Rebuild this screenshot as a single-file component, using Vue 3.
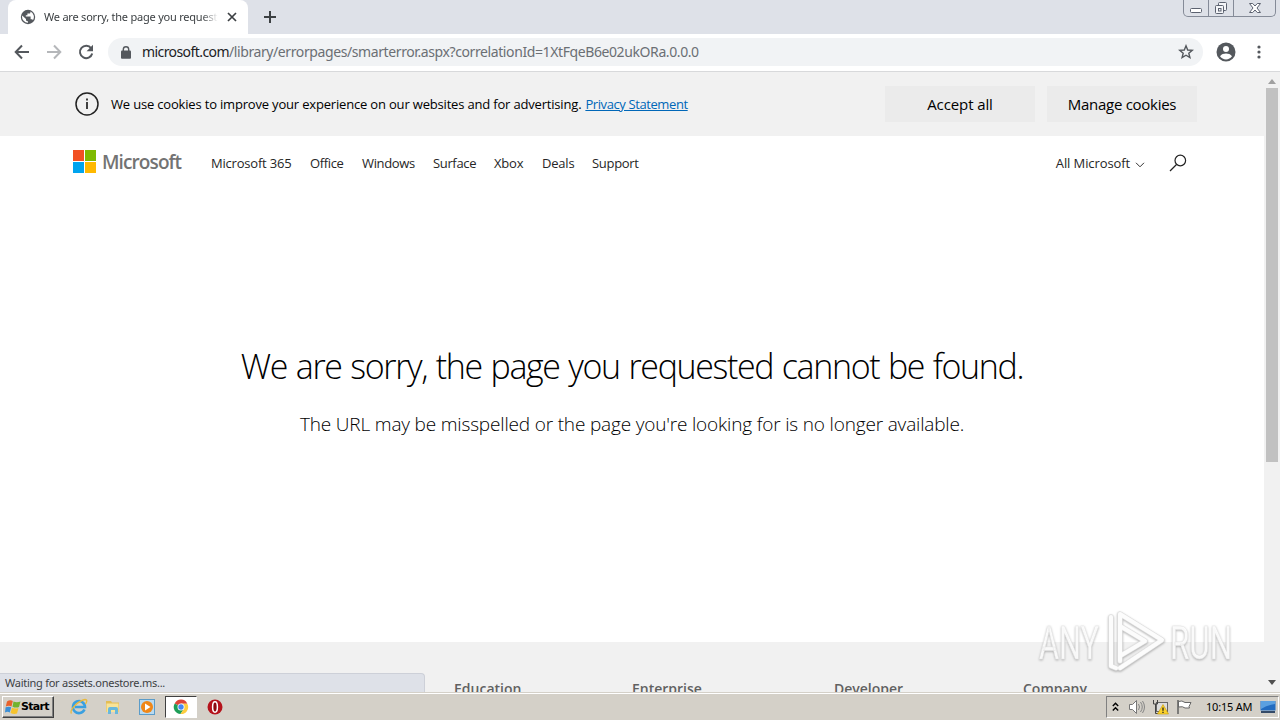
<script setup>
import { ref } from 'vue'

const pageTitle = ref('We are sorry, the page you requested cannot be found.')
const host = 'microsoft.com'
const path = '/library/errorpages/smarterror.aspx?correlationId=1XtFqeB6e02ukORa.0.0.0'

const navLinks = [
    { id: 'm365', name: 'Microsoft 365' },
    { id: 'office', name: 'Office' },
    { id: 'windows', name: 'Windows' },
    { id: 'surface', name: 'Surface' },
    { id: 'xbox', name: 'Xbox' },
    { id: 'deals', name: 'Deals' },
    { id: 'support', name: 'Support' },
]

const footerColumns = ['Education', 'Enterprise', 'Developer', 'Company']
</script>

<template>
    <div class="screen">
        <div class="tabstrip">
            <div class="tab">
                <svg class="globe" width="16" height="16" viewBox="0 0 16 16">
                    <circle cx="8" cy="8" r="7.2" fill="#54585d" />
                    <path d="M2.2 6.6 6 10v1.6l2 1v1.2A6 6 0 0 1 2.2 6.6ZM10.4 2.6v.8c0 .8-.6 1.2-1.4 1.2H7.4v1.6H5.8v1.4h4.8v2.6h1.6l.8 1A6 6 0 0 0 10.4 2.6Z" fill="#fff" />
                </svg>
                <span class="tab-title">{{ pageTitle }}</span>
                <svg class="tab-close" width="10" height="10" viewBox="0 0 10 10">
                    <path d="M1 1l8 8M9 1l-8 8" stroke="#3c4043" stroke-width="1.7" />
                </svg>
            </div>
            <svg class="new-tab" width="12" height="12" viewBox="0 0 12 12">
                <path d="M6 0v12M0 6h12" stroke="#3c4043" stroke-width="2" />
            </svg>
            <div class="window-buttons">
                <div class="wb minimize">
                    <svg width="14" height="14" viewBox="0 0 14 14">
                        <rect x="1.5" y="7.5" width="11" height="4" rx="1" fill="#fff" stroke="#5c6270" />
                    </svg>
                </div>
                <div class="wb restore">
                    <svg width="14" height="14" viewBox="0 0 14 14">
                        <g fill="#f4f5f8" stroke="#5c6270">
                            <rect x="4.5" y="1.5" width="8" height="8" rx="1" />
                            <rect x="1.5" y="4.5" width="8" height="8" rx="1" />
                            <rect x="4.5" y="7.5" width="2.5" height="2.5" />
                        </g>
                    </svg>
                </div>
                <div class="wb close">
                    <svg width="14" height="14" viewBox="0 0 14 14">
                        <path d="M1.5 2.5h3.2L7 5l2.300-2.500h3.200L9 7l3.500 4.500H9.300L7 9l-2.300 2.500H1.500L5 7Z" fill="#fff" stroke="#5c6270" />
                    </svg>
                </div>
            </div>
        </div>

        <div class="toolbar">
            <svg class="tool" width="16" height="16" viewBox="0 0 16 16">
                <path d="M15 8H2M8 1.5 1.7 8 8 14.5" fill="none" stroke="#54585d" stroke-width="2" />
            </svg>
            <svg class="tool" width="16" height="16" viewBox="0 0 16 16">
                <path d="M1 8h13M8 1.5 14.3 8 8 14.5" fill="none" stroke="#b5b7ba" stroke-width="2" />
            </svg>
            <svg class="tool" width="16" height="16" viewBox="0 0 16 16">
                <path d="M13.2 4.3A6.2 6.2 0 1 0 14.2 9.5" fill="none" stroke="#54585d" stroke-width="2" />
                <path d="M15 .8v6.4H8.6Z" fill="#54585d" />
            </svg>
            <div class="omnibox">
                <svg width="10" height="13" viewBox="0 0 10 13">
                    <path d="M2.3 5V3.5a2.7 2.7 0 0 1 5.4 0V5" fill="none" stroke="#54585d" stroke-width="1.4" />
                    <rect y="4.5" width="10" height="8.2" rx="1" fill="#54585d" />
                </svg>
                <span class="url"><b>{{ host }}</b>{{ path }}</span>
                <svg class="star" width="16" height="16" viewBox="0 0 16 16">
                    <path d="M8 1.8 9.700 6l4.600.3-3.500 2.900 1.100 4.400L8 11.200l-3.900 2.400 1.100-4.400L1.700 6.300 6.300 6Z" fill="none" stroke="#54585d" stroke-width="1.4" />
                </svg>
            </div>
            <svg class="avatar" width="20" height="20" viewBox="0 0 20 20">
                <circle cx="10" cy="10" r="9.5" fill="#54585d" />
                <circle cx="10" cy="7" r="3" fill="#fff" />
                <path d="M4 14.2c1.2-2 4-2.700 6-2.700s4.800.7 6 2.700a7.200 7.200 0 0 1-12 0Z" fill="#fff" />
            </svg>
            <svg class="dots" width="4" height="14" viewBox="0 0 4 14">
                <g fill="#54585d">
                    <circle cx="2" cy="2" r="1.6" />
                    <circle cx="2" cy="7" r="1.6" />
                    <circle cx="2" cy="12" r="1.6" />
                </g>
            </svg>
        </div>

        <div class="viewport">
            <div class="page">
                <div class="cookies">
                    <svg width="24" height="24" viewBox="0 0 24 24">
                        <circle cx="12" cy="12" r="11" fill="none" stroke="#222" stroke-width="1.5" />
                        <path d="M12 10v7M12 6.5v2" stroke="#222" stroke-width="1.7" />
                    </svg>
                    <p><span class="notice">We use cookies to improve your experience on our websites and for advertising.</span><a>Privacy Statement</a></p>
                    <div class="cookie-button"><span class="accept">Accept all</span></div>
                    <div class="cookie-button"><span class="manage">Manage cookies</span></div>
                </div>

                <header>
                    <svg class="ms-logo" width="23" height="23" viewBox="0 0 23 23">
                        <path d="M0 0h11v11H0Z" fill="#f25022" />
                        <path d="M12 0h11v11H12Z" fill="#7fba00" />
                        <path d="M0 12h11v11H0Z" fill="#00a4ef" />
                        <path d="M12 12h11v11H12Z" fill="#ffb900" />
                    </svg>
                    <span class="wordmark">Microsoft</span>
                    <nav>
                        <a v-for="{ id, name } in navLinks" :key="id" :class="id">{{ name }}</a>
                    </nav>
                    <span class="all">All Microsoft</span>
                    <svg class="chevron" width="10" height="6" viewBox="0 0 10 6">
                        <path d="M1 .8 5 4.8 9 .8" fill="none" stroke="#333" />
                    </svg>
                    <svg class="search" width="18" height="18" viewBox="0 0 18 18">
                        <circle cx="11.3" cy="6.5" r="5.3" fill="none" stroke="#222" stroke-width="1.2" />
                        <path d="M7.5 10.5 1 17" stroke="#222" stroke-width="1.2" />
                    </svg>
                </header>

                <main>
                    <h1><span>{{ pageTitle }}</span></h1>
                    <p><span>The URL may be misspelled or the page you're looking for is no longer available.</span></p>
                </main>

                <footer>
                    <div v-for="column in footerColumns" :key="column" :class="column.toLowerCase()">{{ column }}</div>
                </footer>
            </div>

            <div class="scrollbar">
                <svg width="8" height="5" viewBox="0 0 8 5"><path d="M0 5 4 0l4 5Z" fill="#a0a0a0" /></svg>
                <div class="thumb"></div>
                <svg width="8" height="5" viewBox="0 0 8 5"><path d="M0 0h8L4 5Z" fill="#505050" /></svg>
            </div>

            <div class="status"><span>Waiting for assets.onestore.ms...</span></div>

            <svg class="watermark" width="200" height="70" viewBox="0 0 200 70">
                <g fill="#fff" fill-opacity=".9" stroke="#e4e4e4" stroke-width=".5">
                    <text x="2" y="51" textLength="60" lengthAdjust="spacingAndGlyphs">ANY</text>
                    <text x="133" y="51" textLength="62" lengthAdjust="spacingAndGlyphs">RUN</text>
                </g>
                <g fill="none" stroke-linejoin="round" stroke-linecap="round">
                    <path d="M83 53V6l42 26-42 28M74 9v49l5 2M83 18l25 15-25 15" stroke="#e0e0e0" stroke-width="5.4" />
                    <path d="M83 53V6l42 26-42 28M74 9v49l5 2M83 18l25 15-25 15" stroke="#fcfcfc" stroke-width="4" />
                </g>
            </svg>
        </div>

        <div class="taskbar">
            <div class="start">
                <svg width="16" height="16" viewBox="0 0 16 16">
                    <path d="M2 2.500q3-2 5.800-.5L6.500 7.500Q4 6 .8 7.500Z" fill="#e8622c" />
                    <path d="M8.500 2.500q3 1.500 7 0l-1.500 5.500q-3 1.300-6.500-.3Z" fill="#72b32e" />
                    <path d="M.6 8.300Q4 7 6.200 8.300L4.800 13.500Q2.500 11.800 0 13.500Z" fill="#3b8fd6" />
                    <path d="M7 8.700q3 1.500 6.500.3L12 14.500q-3 1.200-6.500-.5Z" fill="#f6c32c" />
                </svg>
                <span>Start</span>
            </div>
            <div class="launch">
                <svg width="18" height="18" viewBox="0 0 18 18">
                    <path d="M14.5 11.5A6 6 0 1 1 15 9H5" fill="none" stroke="#3aa0e0" stroke-width="2.6" />
                    <path d="M1.5 15.5C-1 12 8 3 15 1.5c3 0 1.500 3 .5 4.500" fill="none" stroke="#e9b93c" stroke-width="1.3" />
                </svg>
            </div>
            <div class="launch">
                <svg width="18" height="18" viewBox="0 0 18 18">
                    <path d="M2 3h5l1 1.5h7V14H2Z" fill="#e3bd55" />
                    <path d="M2.5 5.5h12V14h-12Z" fill="#f8e398" />
                    <path d="M4 16v-5q0-2 2-2h6q2 0 2 2v5h-3v-4H7v4Z" fill="#69b8dc" />
                </svg>
            </div>
            <div class="launch">
                <svg width="18" height="18" viewBox="0 0 18 18">
                    <rect x="1.5" y="1.5" width="15" height="15" fill="#b9daf0" stroke="#5b9cc9" />
                    <circle cx="9" cy="9" r="6" fill="#f08717" />
                    <path d="M7 5.5v7L12.5 9Z" fill="#fff" />
                </svg>
            </div>
            <div class="launch active">
                <svg width="16" height="16" viewBox="0 0 16 16">
                    <path d="M8 8 1.7 4.4A7 7 0 0 1 14.3 4.7H8Z" fill="#de4437" />
                    <path d="M8 8 1.7 4.4A7 7 0 0 0 7.5 15l3.5-5Z" fill="#1e9e58" />
                    <path d="M8 4.7h6.3A7 7 0 0 1 7.5 15L11 9.5Z" fill="#fdcd40" />
                    <circle cx="8" cy="8" r="3.5" fill="#fff" />
                    <circle cx="8" cy="8" r="2.7" fill="#4587f3" />
                </svg>
            </div>
            <div class="launch">
                <svg width="16" height="16" viewBox="0 0 16 16">
                    <circle cx="8" cy="8" r="7.5" fill="#b5121b" />
                    <ellipse cx="8" cy="8" rx="2.4" ry="5.2" fill="#8d0a10" stroke="#fff" stroke-width="1.5" />
                </svg>
            </div>
            <div class="tray">
                <svg width="7" height="10" viewBox="0 0 7 10">
                    <path d="M.8 4 3.5 1.2 6.2 4M.8 8.5l2.700-2.800 2.700 2.800" fill="none" stroke="#000" stroke-width="1.4" />
                </svg>
                <svg class="speaker" width="18" height="16" viewBox="0 0 18 16">
                    <path d="M1.5 5.5h3l4-4v13l-4-4h-3Z" fill="#fff" stroke="#777" />
                    <path d="M10.5 5q2 3 0 6M12.5 3q3.500 5 0 10M14.5 2q4 6 0 12" fill="none" stroke="#858585" />
                </svg>
                <svg class="network" width="17" height="16" viewBox="0 0 17 16">
                    <rect x="4.5" y="3.5" width="11" height="9" fill="#ddd" stroke="#666" />
                    <path d="M1.5 1v4h4V1M3.5 5v9.500h4" fill="none" stroke="#444" />
                    <path d="M11 5.5 16.5 15h-11Z" fill="#fbd22b" stroke="#c79a00" stroke-width=".6" />
                    <path d="M11 8.5v3.300M11 12.8v1.200" stroke="#222" stroke-width="1.3" />
                </svg>
                <svg class="flag" width="17" height="16" viewBox="0 0 17 16">
                    <path d="M2.500 2.500q3.500-1.500 6.500 1h6l-2 4 .5 1.500H9q-2-2-6.500-1Z" fill="#fff" stroke="#666" />
                    <path d="M2 1v14" stroke="#666" stroke-width="1.6" />
                </svg>
                <span class="clock">10:15 AM</span>
                <svg class="desktop" width="16" height="14" viewBox="0 0 16 14">
                    <path d="M.5 1h15v9.500H.5Z" fill="#236cc0" />
                    <path d="M1 1h14v3Q7 5 1 9Z" fill="#5ba0e0" />
                    <path d="M1 12h14" stroke="#354b68" stroke-width="2" />
                </svg>
            </div>
        </div>
    </div>
</template>

<style>
body {
    margin: 0;
    overflow: hidden;
}
</style>

<style scoped>
.screen {
    width: 1280px;
    height: 720px;
    display: flex;
    flex-direction: column;
    font-family: "Open Sans", "Noto Sans", sans-serif;
    color: #000;
    overflow: hidden;
}

svg {
    flex: none;
    display: block;
}

span,
a {
    white-space: nowrap;
}

.tabstrip {
    height: 34px;
    background: #dee1e8;
    display: flex;
    flex: none;
}

.tab {
    width: 240px;
    box-sizing: border-box;
    margin-left: 8px;
    padding: 0 11px 0 12px;
    display: flex;
    align-items: center;
    background: #fff;
    border-radius: 8px 8px 0 0;
}

.tab-title {
    font: 11px/16px "Noto Sans", sans-serif;
    width: 174px;
    margin-left: 8px;
    overflow: hidden;
    letter-spacing: -0.22px;
    color: #3c4043;
    mask-image: linear-gradient(to right, #000 158px, transparent);
}

.tab-close {
    margin-left: 9px;
}

.new-tab {
    margin: 11px 0 0 16px;
}

.window-buttons {
    display: flex;
    margin: 0 4px 0 auto;
    height: 16px;
    border: 1px solid #858b98;
    border-top: 0;
    border-radius: 0 0 5px 5px;
}

.wb {
    display: flex;
    justify-content: center;
    align-items: center;
    width: 24px;
    border-right: 1px solid #858b98;
}

.wb.close {
    width: 41px;
    border: 0;
}

.toolbar {
    height: 37px;
    flex: none;
    box-sizing: content-box;
    display: flex;
    align-items: center;
    padding-left: 14px;
    background: #fff;
    border-bottom: 1px solid #d8d9db;
}

.toolbar > svg,
.omnibox {
    margin-bottom: 1px;
}

.tool {
    margin-right: 16px;
}

.omnibox {
    display: flex;
    align-items: center;
    box-sizing: border-box;
    width: 1095px;
    height: 28px;
    margin-left: -2px;
    padding: 0 9px 0 13px;
    border-radius: 14px;
    background: #f1f3f5;
}

.url {
    margin-left: 11px;
    font: 14px/20px "Noto Sans", sans-serif;
    color: #6b6f74;
    letter-spacing: -0.4px;
}

.url b {
    font-weight: normal;
    letter-spacing: -0.58px;
    color: #202124;
}

.star {
    margin-left: auto;
}

.avatar {
    margin-left: 13px;
}

.dots {
    margin-left: 21px;
}

.viewport {
    position: relative;
    height: 620px;
    flex: none;
    display: flex;
    overflow: hidden;
}

.page {
    width: 1264px;
    display: flex;
    flex-direction: column;
}

.cookies {
    height: 64px;
    flex: none;
    background: #f1f1f1;
    display: flex;
    align-items: center;
    padding: 0 67px 0 75px;
}

.cookies p {
    margin: 0 auto 0 12px;
    font-size: 13px;
    line-height: 20px;
}

.notice {
    letter-spacing: -0.18px;
}

.cookies p a {
    color: #0067b8;
    text-decoration: underline;
    letter-spacing: -0.4px;
    margin-left: 4px;
}

.cookie-button {
    width: 150px;
    height: 36px;
    margin-left: 12px;
    background: #ebebeb;
    display: flex;
    align-items: center;
    justify-content: center;
    font-size: 15px;
}

.accept {
    letter-spacing: -0.1px;
}

.manage {
    letter-spacing: -0.28px;
}

header {
    height: 54px;
    flex: none;
    display: flex;
    align-items: center;
    padding: 0 77px 0 73px;
    font-size: 13px;
    color: #262626;
}

.ms-logo {
    margin-top: -3px;
}

.wordmark {
    width: 80px;
    margin: -3px 0 0 6px;
    font-size: 19px;
    font-weight: 600;
    letter-spacing: -0.9px;
    color: #737373;
}

nav {
    display: flex;
    gap: 18px;
    margin: 0 auto 0 29px;
    letter-spacing: -0.2px;
}

.m365 {
    width: 81px;
}

.office {
    width: 34px;
    letter-spacing: -0.35px;
}

.windows {
    width: 53px;
    letter-spacing: -0.35px;
}

.surface {
    width: 43px;
    letter-spacing: -0.35px;
}

.xbox {
    width: 30px;
}

.deals {
    width: 32px;
}

.support {
    width: 48px;
    letter-spacing: -0.3px;
}

.all {
    letter-spacing: -0.1px;
}

.chevron {
    margin: 3px 0 0 5px;
}

.search {
    margin-left: 24px;
}

main {
    height: 452px;
    flex: none;
    display: flex;
    flex-direction: column;
    align-items: center;
}

h1 {
    margin: 153px 0 0;
    font-size: 34px;
    line-height: 46px;
    font-weight: 300;
    letter-spacing: -1.37px;
    word-spacing: 1.2px;
}

main p {
    margin: 23px 0 0;
    font-size: 19px;
    line-height: 24px;
    font-weight: 300;
    letter-spacing: -0.17px;
}

footer {
    flex: 1;
    background: #f1f1f1;
    display: flex;
    padding: 37px 0 0 454px;
    font-size: 14px;
    font-weight: 600;
    line-height: 20px;
    color: #616161;
}

.education {
    width: 178px;
}

.enterprise {
    width: 202px;
}

.developer {
    width: 189px;
}

.scrollbar {
    width: 16px;
    background: #f1f1f1;
    display: flex;
    flex-direction: column;
    align-items: center;
    padding: 7px 0;
    box-sizing: border-box;
}

.thumb {
    width: 12px;
    height: 374px;
    margin: 4px 0 auto;
    background: #c1c1c1;
}

/* loading bubble over the bottom left of the page */
.status {
    position: absolute;
    left: 0;
    bottom: 0;
    width: 425px;
    height: 19px;
    padding-left: 5px;
    box-sizing: border-box;
    background: #dee1e8;
    border: 1px solid #cdd0d8;
    border-width: 1px 1px 0 0;
    border-radius: 0 4px 0 0;
    font: 11px/18px "Noto Sans", sans-serif;
    letter-spacing: -0.26px;
    color: #3c4043;
}

.watermark {
    position: absolute;
    left: 1037px;
    top: 536px;
    filter: drop-shadow(0 1px 1px rgba(0, 0, 0, 0.3));
}

.watermark text {
    font: 46px Roboto, sans-serif;
}

.taskbar {
    height: 28px;
    flex: none;
    box-sizing: border-box;
    display: flex;
    align-items: center;
    background: #d4d0c8;
    border-top: 1px solid #d4d0c8;
    box-shadow: inset 0 1px #fff;
    padding: 1px 1px 0 2px;
}

.start {
    width: 52px;
    height: 22px;
    box-sizing: border-box;
    display: flex;
    align-items: center;
    border: 1px solid;
    border-color: #fff #404040 #404040 #fff;
    box-shadow: inset -1px -1px #808080;
    padding-left: 2px;
    margin-right: 9px;
}

.start span {
    font: bold 11px/16px "DejaVu Sans", sans-serif;
    letter-spacing: -0.7px;
}

.launch {
    width: 32px;
    height: 22px;
    margin-right: 2px;
    box-sizing: border-box;
    display: flex;
    align-items: center;
    justify-content: center;
}

.launch.active {
    background: #fff;
    border: 1px solid;
    border-color: #404040 #fff #fff #404040;
}

.tray {
    width: 173px;
    height: 22px;
    margin-left: auto;
    box-sizing: border-box;
    display: flex;
    align-items: center;
    border: 1px solid;
    border-color: #808080 #fff #fff #808080;
    padding-left: 5px;
}

.speaker {
    margin-left: 9px;
}

.network {
    margin-left: 6px;
}

.flag {
    margin-left: 7px;
}

.clock {
    margin-left: 13px;
    font: 11px/16px "Noto Sans", sans-serif;
    letter-spacing: -0.2px;
    width: 49px;
}

.desktop {
    margin-left: 5px;
}
</style>
